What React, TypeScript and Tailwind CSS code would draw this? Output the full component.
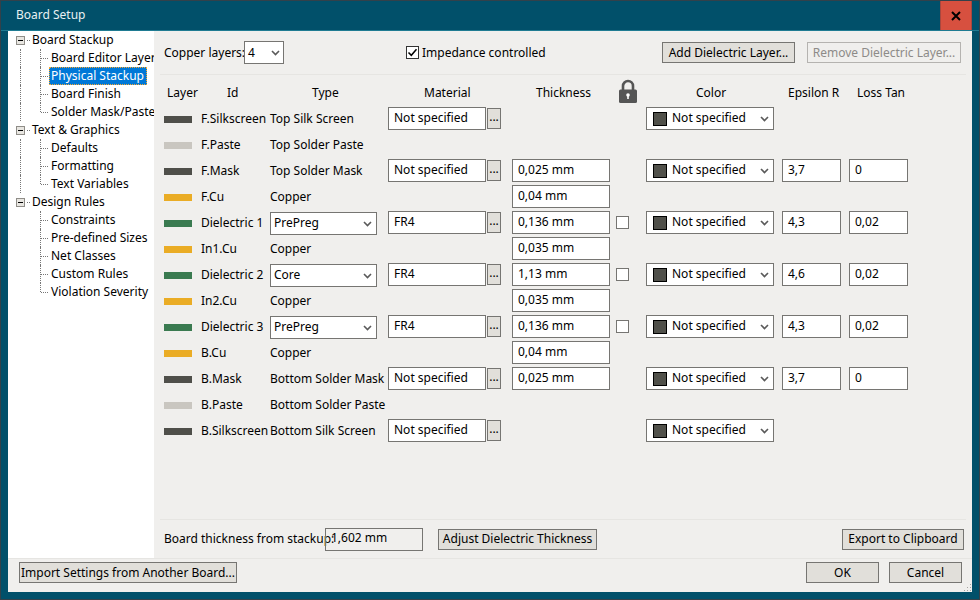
import React from "react";

const font = { fontFamily: '"Noto Sans", sans-serif' };

const tree = [
  { name: "Board Stackup", items: ["Board Editor Layers", "Physical Stackup", "Board Finish", "Solder Mask/Paste"] },
  { name: "Text & Graphics", items: ["Defaults", "Formatting", "Text Variables"] },
  { name: "Design Rules", items: ["Constraints", "Pre-defined Sizes", "Net Classes", "Custom Rules", "Violation Severity"] },
];

type Row = {
  id: string;
  type: string;
  swatch: string;
  kind?: string;
  material?: string;
  thickness?: string;
  lock?: boolean;
  color?: boolean;
  eps?: string;
  loss?: string;
};

const DARK = "bg-[#4f4f4a]";
const PASTE = "bg-[#c9c6c0]";
const CU = "bg-[#eaac25]";
const DIEL = "bg-[#3a7a50]";

const rows: Row[] = [
  { id: "F.Silkscreen", type: "Top Silk Screen", swatch: DARK, material: "Not specified", color: true },
  { id: "F.Paste", type: "Top Solder Paste", swatch: PASTE },
  { id: "F.Mask", type: "Top Solder Mask", swatch: DARK, material: "Not specified", thickness: "0,025 mm", color: true, eps: "3,7", loss: "0" },
  { id: "F.Cu", type: "Copper", swatch: CU, thickness: "0,04 mm" },
  { id: "Dielectric 1", type: "", kind: "PrePreg", swatch: DIEL, material: "FR4", thickness: "0,136 mm", lock: true, color: true, eps: "4,3", loss: "0,02" },
  { id: "In1.Cu", type: "Copper", swatch: CU, thickness: "0,035 mm" },
  { id: "Dielectric 2", type: "", kind: "Core", swatch: DIEL, material: "FR4", thickness: "1,13 mm", lock: true, color: true, eps: "4,6", loss: "0,02" },
  { id: "In2.Cu", type: "Copper", swatch: CU, thickness: "0,035 mm" },
  { id: "Dielectric 3", type: "", kind: "PrePreg", swatch: DIEL, material: "FR4", thickness: "0,136 mm", lock: true, color: true, eps: "4,3", loss: "0,02" },
  { id: "B.Cu", type: "Copper", swatch: CU, thickness: "0,04 mm" },
  { id: "B.Mask", type: "Bottom Solder Mask", swatch: DARK, material: "Not specified", thickness: "0,025 mm", color: true, eps: "3,7", loss: "0" },
  { id: "B.Paste", type: "Bottom Solder Paste", swatch: PASTE },
  { id: "B.Silkscreen", type: "Bottom Silk Screen", swatch: DARK, material: "Not specified", color: true },
];

function Chevron() {
  return (
    <svg width="9" height="6" viewBox="0 0 9 6" className="shrink-0">
      <path d="M1 1 L4.5 4.5 L8 1" fill="none" stroke="#5a5a5a" strokeWidth="1.6" />
    </svg>
  );
}

function Field({ value, className = "" }: { value: string; className?: string }) {
  return (
    <div className={`h-[23px] bg-white border border-[#767572] pl-[5px] flex items-center leading-none pb-[2px] ${className}`}>
      {value}
    </div>
  );
}

function Btn({ label, className = "" }: { label: string; className?: string }) {
  return (
    <button className={`h-[21px] bg-[#e1dfda] border border-[#767572] flex items-center justify-center leading-none ${className}`}>
      {label}
    </button>
  );
}

function Tree() {
  return (
    <div className="w-[146px] bg-white shrink-0 overflow-hidden">
      {tree.map((group, g) => (
        <div key={group.name}>
          <div className="h-[18px] flex items-center">
            <div className="w-[8px] shrink-0" />
            <div className="w-[9px] h-[9px] border border-[#8f8d88] bg-[#e8e6e1] flex items-center justify-center shrink-0">
              <div className="w-[5px] h-px bg-black" />
            </div>
            <div className="w-[3px] ml-[2px] border-t border-dotted border-[#777]" />
            <span className="ml-[2px] whitespace-nowrap">{group.name}</span>
          </div>
          {group.items.map((item, i) => {
            const last = i === group.items.length - 1;
            const selected = item === "Physical Stackup";
            return (
              <div key={item} className="h-[18px] flex items-center">
                <div className="w-[12px] shrink-0" />
                <div className={`w-px h-full shrink-0 ${g < tree.length - 1 ? "border-l border-dotted border-[#777]" : ""}`} />
                <div className="w-[19px] shrink-0" />
                <div className={`w-[8px] shrink-0 self-start border-l border-dotted border-[#777] ${last ? "h-[9px]" : "h-full"} relative`}>
                  <div className="w-[7px] mt-[9px] border-t border-dotted border-[#777]" />
                </div>
                {selected ? (
                  <span className="ml-px h-[18px] bg-[#0078d7] text-white border border-dotted border-[#f8a830] pl-px pr-[2px] flex items-center leading-none pb-[1px] whitespace-nowrap">
                    {item}
                  </span>
                ) : (
                  <span className="ml-[3px] whitespace-nowrap">{item}</span>
                )}
              </div>
            );
          })}
        </div>
      ))}
    </div>
  );
}

function Lock() {
  return (
    <svg width="18" height="24" viewBox="0 0 18 24" className="block mt-[-5px]">
      <path d="M4 11 V7 a5 5 0 0 1 10 0 V11" fill="none" stroke="#555" strokeWidth="2.6" />
      <rect x="0" y="10.5" width="18" height="13.5" rx="1.5" fill="#555" />
      <circle cx="9" cy="16" r="1.8" fill="#fff" />
      <rect x="8.2" y="16" width="1.6" height="4" fill="#fff" />
    </svg>
  );
}

export default function App() {
  return (
    <div style={font} className="w-[980px] h-[600px] bg-[#01506a] border border-[#33414a] flex flex-col text-[12px] text-black overflow-hidden relative">
      {/* title bar */}
      <div className="h-[29px] flex items-center shrink-0 border-b border-[#1f7b92] box-content">
        <span className="ml-[15px] text-[#e8f0f2] pb-[2px]">Board Setup</span>
        <button className="ml-auto mr-[7px] w-[32px] h-[29px] bg-[#d7503f] border-x border-[#a8473e] flex items-center justify-center">
          <svg width="10" height="10" viewBox="0 0 10 10">
            <path d="M1 1 L9 9 M9 1 L1 9" stroke="#000" strokeWidth="2" />
          </svg>
        </button>
      </div>

      <div className="flex-1 mx-[7px] mb-[7px] bg-[#f0efed] flex flex-col min-h-0">
        <div className="flex flex-1 min-h-0">
          <Tree />

          <div className="flex-1 flex flex-col min-w-0">
            {/* top controls */}
            <div className="h-[43px] mx-[6px] pl-[4px] flex items-center border-b border-[#e6e5e2] box-content shrink-0">
              <span className="w-[80px] whitespace-nowrap">Copper layers:</span>
              <div className="w-[40px] h-[23px] bg-white border border-[#767572] flex items-center justify-between pl-[3px] pr-[3px]">
                <span>4</span>
                <Chevron />
              </div>
              <div className="ml-[122px] w-[13px] h-[13px] bg-white border border-[#333] flex items-center justify-center">
                <svg width="11" height="11" viewBox="0 0 11 11">
                  <path d="M1.5 5.5 L4.3 8.3 L9.5 2.3" fill="none" stroke="#000" strokeWidth="1.5" />
                </svg>
              </div>
              <span className="ml-[3px] w-[240px] whitespace-nowrap">Impedance controlled</span>
              <Btn label="Add Dielectric Layer..." className="w-[133px]" />
              <button className="ml-[12px] w-[154px] h-[21px] border border-[#b5b3b0] text-[#8d8b88] flex items-center justify-center leading-none">
                Remove Dielectric Layer...
              </button>
            </div>

            {/* stackup table */}
            <div className="flex-1 mt-[5px] pl-[10px] grid grid-cols-[37px_69px_118px_124px_104px_30px_136px_67px_59px] auto-rows-[26px] content-start">
              <div className="pl-[3px] pt-[4px]">Layer</div>
              <div className="pl-[26px] pt-[4px]">Id</div>
              <div className="pl-[42px] pt-[4px]">Type</div>
              <div className="pl-[36px] pt-[4px]">Material</div>
              <div className="pl-[24px] pt-[4px]">Thickness</div>
              <div className="pl-[3px] pt-[4px]"><Lock /></div>
              <div className="pl-[50px] pt-[4px]">Color</div>
              <div className="pl-[6px] pt-[4px]">Epsilon R</div>
              <div className="pl-[8px] pt-[4px]">Loss Tan</div>

              {rows.map((r) => (
                <React.Fragment key={r.id}>
                  <div className="flex items-center pt-px">
                    <div className={`w-[28px] h-[7px] ${r.swatch}`} />
                  </div>
                  <div className="flex items-center whitespace-nowrap pb-[1px]">{r.id}</div>
                  <div className="flex items-center whitespace-nowrap pb-[1px]">
                    {r.kind ? (
                      <div className="mt-[2px] w-[107px] h-[23px] bg-white border border-[#767572] flex items-center justify-between pl-[3px] pr-[4px]">
                        <span className="pb-[1px]">{r.kind}</span>
                        <Chevron />
                      </div>
                    ) : (
                      r.type
                    )}
                  </div>
                  <div className="flex items-start pt-px gap-px">
                    {r.material && (
                      <>
                        <Field value={r.material} className="w-[98px]" />
                        <button className="w-[14px] h-[21px] mt-px bg-[#e1dfda] border border-[#767572] flex items-center justify-center leading-none pb-[3px]">...</button>
                      </>
                    )}
                  </div>
                  <div className="pt-px">{r.thickness && <Field value={r.thickness} className="w-[98px]" />}</div>
                  <div className="pt-[6px]">{r.lock && <div className="w-[13px] h-[13px] bg-white border border-[#767572]" />}</div>
                  <div className="pt-px">
                    {r.color && (
                      <div className="w-[128px] h-[23px] bg-white border border-[#767572] flex items-center pl-[6px] pr-[4px]">
                        <div className="w-[14px] h-[14px] bg-[#50504a] border border-black shrink-0" />
                        <span className="ml-[5px] flex-1 whitespace-nowrap pb-[1px]">Not specified</span>
                        <Chevron />
                      </div>
                    )}
                  </div>
                  <div className="pt-px">{r.eps && <Field value={r.eps} className="w-[59px]" />}</div>
                  <div className="pt-px">{r.loss && <Field value={r.loss} className="w-[59px]" />}</div>
                </React.Fragment>
              ))}
            </div>

            {/* board thickness row */}
            <div className="h-[38px] mx-[6px] pl-[4px] pr-[2px] flex items-center border-t border-[#e6e5e2] box-content shrink-0">
              <span className="w-[161px] whitespace-nowrap">Board thickness from stackup:</span>
              <div className="w-[98px] h-[23px] border border-[#767572] pl-[5px] flex items-center pb-[2px]">1,602 mm</div>
              <Btn label="Adjust Dielectric Thickness" className="ml-[15px] w-[159px]" />
              <Btn label="Export to Clipboard" className="ml-auto w-[122px]" />
            </div>
          </div>
        </div>

        {/* footer */}
        <div className="h-[33px] border-t border-[#e6e5e2] box-content flex items-center pl-[11px] pr-[10px] shrink-0 relative">
          <Btn label="Import Settings from Another Board..." className="w-[218px] mt-[-6px]" />
          <Btn label="OK" className="ml-auto w-[73px] mt-[-6px] border-[#1c7ea3]" />
          <Btn label="Cancel" className="ml-[10px] w-[73px] mt-[-6px]" />
          <svg width="8" height="8" viewBox="0 0 8 8" className="absolute right-0 bottom-0" fill="#a5a3a0">
            <rect x="6" y="0" width="1" height="1" />
            <rect x="3" y="3" width="1" height="1" />
            <rect x="6" y="3" width="1" height="1" />
            <rect x="0" y="6" width="1" height="1" />
            <rect x="3" y="6" width="1" height="1" />
            <rect x="6" y="6" width="1" height="1" />
          </svg>
        </div>
      </div>
    </div>
  );
}
